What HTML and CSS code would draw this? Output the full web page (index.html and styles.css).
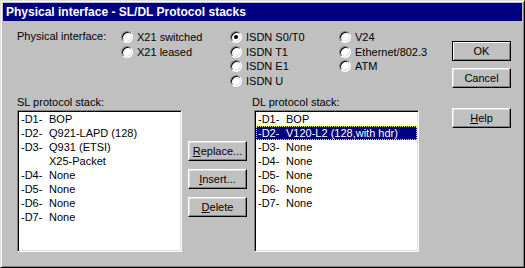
FILE: index.html
```html
<!DOCTYPE html>
<html lang="en">
<head>
  <meta charset="UTF-8" />
  <title>Physical interface - SL/DL Protocol stacks</title>
  <link rel="stylesheet" href="styles.css">
</head>
<body>
  <div class="window">
    <div class="titlebar">Physical interface - SL/DL Protocol stacks</div>

    <div class="content">
      <div class="main">
        <div class="iface">
          <div class="iface-label">Physical interface:</div>
          <div class="radio-col">
            <label class="radio-item"><span class="radio"></span>X21 switched</label>
            <label class="radio-item"><span class="radio"></span>X21 leased</label>
          </div>
          <div class="radio-col">
            <label class="radio-item"><span class="radio checked"></span>ISDN S0/T0</label>
            <label class="radio-item"><span class="radio"></span>ISDN T1</label>
            <label class="radio-item"><span class="radio"></span>ISDN E1</label>
            <label class="radio-item"><span class="radio"></span>ISDN U</label>
          </div>
          <div class="radio-col">
            <label class="radio-item"><span class="radio"></span>V24</label>
            <label class="radio-item"><span class="radio"></span>Ethernet/802.3</label>
            <label class="radio-item"><span class="radio"></span>ATM</label>
          </div>
        </div>

        <div class="stacks">
          <div class="stack">
            <div class="stack-label">SL protocol stack:</div>
            <ul class="listbox">
              <li><span class="code">-D1-</span>BOP</li>
              <li><span class="code">-D2-</span>Q921-LAPD (128)</li>
              <li><span class="code">-D3-</span>Q931 (ETSI)</li>
              <li><span class="code"></span>X25-Packet</li>
              <li><span class="code">-D4-</span>None</li>
              <li><span class="code">-D5-</span>None</li>
              <li><span class="code">-D6-</span>None</li>
              <li><span class="code">-D7-</span>None</li>
            </ul>
          </div>

          <div class="stack-buttons">
            <button class="btn"><u>R</u>eplace...</button>
            <button class="btn"><u>I</u>nsert...</button>
            <button class="btn"><u>D</u>elete</button>
          </div>

          <div class="stack">
            <div class="stack-label dl">DL protocol stack:</div>
            <ul class="listbox">
              <li><span class="code">-D1-</span>BOP</li>
              <li class="selected"><span class="code">-D2-</span>V120-L2 (128,with hdr)</li>
              <li><span class="code">-D3-</span>None</li>
              <li><span class="code">-D4-</span>None</li>
              <li><span class="code">-D5-</span>None</li>
              <li><span class="code">-D6-</span>None</li>
              <li><span class="code">-D7-</span>None</li>
            </ul>
          </div>
        </div>
      </div>

      <div class="side">
        <button class="btn btn-default">OK</button>
        <button class="btn">Cancel</button>
        <button class="btn help"><u>H</u>elp</button>
      </div>
    </div>
  </div>
</body>
</html>
```

FILE: styles.css
```css
body {
  margin: 0;
  font-family: 'Liberation Sans', Arial, sans-serif;
  font-size: 11px;
  color: #000;
}
.window {
  width: 525px;
  height: 268px;
  box-sizing: border-box;
  padding: 2px;
  background-color: #c0c0c0;
  border: 1px solid;
  border-color: #dfdfdf #000 #000 #dfdfdf;
  box-shadow: inset 1px 1px #fff, inset -1px -1px #808080;
}
.titlebar {
  height: 18px;
  line-height: 18px;
  padding-left: 3px;
  background-color: #000080;
  color: #fff;
  font-weight: bold;
  font-size: 12px;
  white-space: nowrap;
}
.content {
  display: flex;
  padding: 9px 0 0 14px;
}
.main {
  width: 402px;
  flex: none;
}
.iface {
  display: flex;
  height: 58px;
}
.iface-label {
  width: 104px;
  flex: none;
  line-height: 14.5px;
  margin-top: -1px;
}
.radio-col {
  width: 109px;
  flex: none;
}
.radio-item {
  display: flex;
  align-items: center;
  gap: 4px;
  height: 14.5px;
  white-space: nowrap;
}
.radio {
  position: relative;
  width: 12px;
  height: 12px;
  box-sizing: border-box;
  border-radius: 50%;
  background-color: #fff;
  border: 1px solid;
  border-color: #808080 #fff #fff #808080;
  box-shadow: inset 1px 1px #000, inset -1px -1px #dfdfdf;
  flex: none;
}
.radio.checked::after {
  content: '';
  position: absolute;
  left: 3px;
  top: 3px;
  width: 4px;
  height: 4px;
  border-radius: 50%;
  background-color: #000;
}
.stacks {
  display: flex;
  margin-top: 7px;
}
.stack {
  width: 165px;
  flex: none;
}
.stack-label {
  line-height: 14px;
  margin-bottom: 1px;
}
.stack-label.dl {
  margin-left: -2px;
}
.listbox {
  list-style: none;
  margin: 0;
  height: 142px;
  box-sizing: border-box;
  background-color: #fff;
  border: 1px solid;
  border-color: #808080 #fff #fff #808080;
  box-shadow: inset 1px 1px #000, inset -1px -1px #dfdfdf;
  padding: 1px;
  overflow: hidden;
}
.listbox li {
  display: flex;
  height: 14px;
  line-height: 14px;
  padding-left: 2px;
  white-space: nowrap;
}
.listbox .code {
  width: 28px;
  flex: none;
}
.listbox li.selected {
  background-color: #000080;
  color: #fff;
  outline: 1px dotted #ffff00;
  outline-offset: -1px;
}
.stack-buttons {
  display: flex;
  flex-direction: column;
  gap: 8px;
  width: 59px;
  flex: none;
  margin: 0 7px 0 6px;
  padding-top: 46px;
}
.btn {
  width: 59px;
  height: 20px;
  box-sizing: border-box;
  padding: 0;
  background-color: #c0c0c0;
  border: 1px solid;
  border-color: #fff #000 #000 #fff;
  box-shadow: inset -1px -1px #808080, inset 1px 1px #dfdfdf;
  font-family: inherit;
  font-size: 11px;
  color: #000;
}
.btn-default {
  border-color: #000;
  box-shadow: inset 1px 1px #fff, inset -1px -1px #808080;
}
.side {
  display: flex;
  flex-direction: column;
  gap: 7px;
  margin-left: 33px;
  padding-top: 11px;
}
.side .help {
  margin-top: 13px;
}
```
